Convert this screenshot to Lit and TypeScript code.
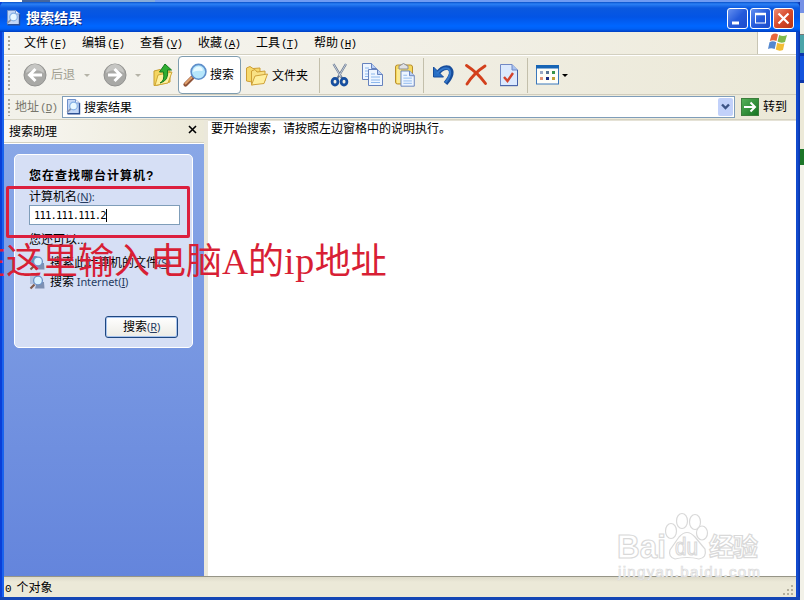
import { LitElement, html, svg, css } from "lit";
import { customElement } from "lit/decorators.js";

const icon = (w: number, h: number, body: unknown, cls = "") =>
  html`<svg class="ic ${cls}" width=${w} height=${h} viewBox="0 0 ${w} ${h}">${body}</svg>`;

const pageIcon = () => icon(16, 16, svg`
  <path d="M2.5 .5H10.5L14.5 4V14.5H2.5Z" fill="#c3d7f6" stroke="#6f90ca"/>
  <path d="M14.5 4V14.8H2.5" fill="none" stroke="#2c4f93" stroke-width="1.4"/>
  <path d="M10.5 .5V4H14.5" fill="#eef5ff" stroke="#7898cf"/>
  <circle cx="8.5" cy="7" r="3.8" fill="#e8f8ff" stroke="#86b2e6" stroke-width="1.2"/>
  <path d="M5.8 9.8L2.2 13.2" stroke="#8c94ab" stroke-width="1.8"/>`);

const circleArrow = (flip: boolean) => icon(24, 24, svg`
  <circle cx="12" cy="12" r="11" fill="#a9a9a6" stroke="#929290"/>
  <path d="M3 10a9 9 0 0 1 18 0Q12 4 3 10" fill="#c6c6c3"/>
  <g transform=${flip ? "translate(24 0) scale(-1 1)" : ""}>
    <path d="M19 12H7M12.5 6L6.5 12L12.5 18" fill="none" stroke="#fff" stroke-width="3"/></g>`);

const upIcon = () => icon(20, 24, svg`
  <path d="M1 8L7 6.5L9 8L17 8V19L3 22.5H1Z" fill="#f4d560" stroke="#c99f2c"/>
  <path d="M5 12L19 9L15 20L2 22.5Z" fill="#fff0a0" stroke="#cfa735"/>
  <path d="M7 20Q12 18 10.5 9H6.5L12 1L18.5 7H14.5Q16 18 7 20Z" fill="#2fae31" stroke="#167a1c"/>`);

const lens = () => icon(24, 24, svg`
  <path d="M9.5 14.5L2.5 21.5" stroke="#8d5136" stroke-width="4.2" stroke-linecap="round"/>
  <path d="M8.5 14.5L2.5 20.5" stroke="#dfa06c" stroke-width="2" stroke-linecap="round"/>
  <circle cx="15.5" cy="8.8" r="7.4" fill="#b5e6fb" stroke="#5e8fcb" stroke-width="1.6"/>
  <path d="M10 9Q10.5 3.5 16.5 3.5Q20.5 5 19.5 8Q14.5 7 10 9Z" fill="#e8faff"/>`);

const folders = () => icon(24, 22, svg`
  <path d="M1.5 16V3L5 1.5L8 3.5L15 3V8L7 17Z" fill="#f6d96c" stroke="#ce9f35"/>
  <path d="M6.5 20V6L10 4.5L12 7L20 6V16Z" fill="#f9e184" stroke="#ce9f35"/>
  <path d="M6.5 20L10 11L22.5 9L19 18.5Z" fill="#ffef9e" stroke="#d0a33a"/>`);

const cut = () => icon(20, 24, svg`
  <path d="M3.5 1L12.5 16M16 1L7 16" stroke="#65758e" stroke-width="2.2"/>
  <path d="M3.5 1L11 14M16 1L9 13" stroke="#dce3ec" stroke-width=".8"/>
  <ellipse cx="5" cy="18.7" rx="2.9" ry="3.3" fill="none" stroke="#174f9f" stroke-width="2.8"/>
  <ellipse cx="14" cy="18.7" rx="2.9" ry="3.3" fill="none" stroke="#174f9f" stroke-width="2.8"/>`);

const sheet = (x: number, y: number) => svg`<g transform="translate(${x} ${y})">
  <path d="M.5.5H9.5L14.5 5.5V16.5H.5Z" fill="#edf5ff" stroke="#6682bd"/>
  <path d="M9.5.5V5.5H14.5" fill="#b9cff5" stroke="#6682bd"/>
  <path d="M3 5H7M3 8H12M3 11H12M3 13.5H12" stroke="#8db8ed"/></g>`;

const copy = () => icon(22, 24, svg`${sheet(0, 0)}${sheet(6, 6)}`);
const paste = () => icon(22, 24, svg`
  <rect x="1.5" y="2" width="17" height="19" rx="2" fill="#f5d95f" stroke="#b98e2c"/>
  <rect x="3" y="6" width="4" height="14" fill="#fbea95"/>
  <path d="M5 6V3L7 2Q9.5-1 12 2L14 3V6Z" fill="#e0e1e4" stroke="#8d8d91"/>
  <g transform="translate(6.5 7.5) scale(.95)">${sheet(0, 0)}</g>`);
const undo = () => icon(24, 22, svg`
  <path d="M5 10Q11 2 17 4Q23 8.5 13.5 19.5" fill="none" stroke="#174d9b" stroke-width="4.6"/>
  <path d="M1.5 3V13H11.5L8 9.5L5 6.5Z" fill="#276fc5" stroke="#174d9b"/>
  <path d="M5 9.5Q11 2.5 16.5 4.7Q21 9 13.5 18.5" fill="none" stroke="#3478cc" stroke-width="2"/>`);
const del = () => icon(22, 22, svg`
  <path d="M1.5 1.5Q13 9 20.5 19.5M20 2Q9 9 2 20" fill="none" stroke="#d3401c" stroke-width="2.9" stroke-linecap="round"/>`);
const props = () => icon(18, 24, svg`
  <path d="M.5 1.5H12L17.5 7V22.5H.5Z" fill="#dce9fd" stroke="#7188c4"/>
  <path d="M12 1.5V7H17.5" fill="#a9c3f1" stroke="#7188c4"/>
  <path d="M17.5 7V22.7H0" fill="none" stroke="#445fa7"/>
  <path d="M4 14L7.5 18L13 10" fill="none" stroke="#d4432d" stroke-width="2.4"/>`);
const views = () => icon(23, 20, svg`
  <rect x=".5" y=".5" width="22" height="18.5" fill="#fffef8" stroke="#3b78bc"/>
  <rect x="0" y="0" width="23" height="3.5" fill="#1765b5"/>
  <path d="M4 6h3v3h-3z" fill="#9ba9c6"/><path d="M10 6h3v3h-3z" fill="#5c7696"/><path d="M16 6h3v3h-3z" fill="#369348"/>
  <path d="M4 12h3v3h-3z" fill="#e39378"/><path d="M10 12h3v3h-3z" fill="#192c83"/><path d="M16 12h3v3h-3z" fill="#c1a135"/>`);
const flag = () => icon(20, 19, svg`
  <path d="M3.5 2Q7-.5 10 1.5L8.5 8Q5 6.5 1.8 8Z" fill="#e7673c"/>
  <path d="M11.2 2Q15 4 19 2L17 9Q13 10.5 9.5 8.5Z" fill="#80b94c"/>
  <path d="M1.5 9.2Q5 7.5 8.2 9.3L6.7 16Q3 14.5 0 16Z" fill="#5588cf"/>
  <path d="M9.2 9.8Q12.5 11.5 16.5 10.2L15 17Q11 18.5 7.8 16.5Z" fill="#f2bd36"/>`);
const searchSmall = (globe: boolean) => icon(16, 16, svg`
  ${globe ? svg`<circle cx="6" cy="6" r="5" fill="#4d9db5"/>` : svg`<path d="M1 1h9v9h-9z" fill="#b4c3df"/>`}
  <path d="M8 8h7l.5 6.500H6z" fill="#7e90b2"/>
  <circle cx="9" cy="6.500" r="4.400" fill="#d8f1ff" stroke="#6b92c6" stroke-width="1.300"/>
  <path d="M5.500 10.500L1.500 14.500" stroke="#805c4c" stroke-width="2.200"/>`);

const MENUS: [string, string][] = [["文件", "F"], ["编辑", "E"], ["查看", "V"], ["收藏", "A"], ["工具", "T"], ["帮助", "H"]];

@customElement("app-root")
export class AppRoot extends LitElement {
  static styles = css`
    :host { display: block; width: 804px; height: 600px; overflow: hidden; position: relative;
      font: 12px/16px "Liberation Sans", "Noto Sans CJK SC", sans-serif; color: #000; background: #ece9d8; }
    * { box-sizing: border-box; }
    .ic { display: block; flex: none; overflow: visible; }
    .screen { display: flex; height: 600px; }
    .window { width: 800px; height: 600px; display: flex; flex-direction: column; background: linear-gradient(90deg, #0a3fd8 0 2px, #1a63ee 2px 4px, #0a44c4 5px 796px, #1650d6 797px, #0632a8 800px); }
    .behind { width: 4px; display: flex; flex-direction: column; background: #ece9d8; }
    .b1 { height: 13px; background: #7591e6; } .b2 { height: 21px; background: #f1efe4; }
    .b3 { height: 19px; background: #4ba4a9; border-top: 1px solid #777; } .b4 { height: 30px; background: #1454dd; border-block: 3px solid #0a35ab; }
    .b5 { height: 66px; } .b6 { height: 16px; background: #1c7628; } .b7 { flex: 1; background: #f2f1e8; }
    .top { height: 2px; background: linear-gradient(90deg, #fff 0 22px, #45659c 22px 50px, #88acd8 50px 155px, #6f9bf3 155px); }
    .title { height: 30px; padding: 0 6px 0 5px; display: flex; align-items: center; gap: 5px; border-radius: 5px 6px 0 0;
      background: linear-gradient(#0850c8 0, #2b80f5 2px, #0b59df 6px, #0354e5 15px, #0066ff 24px, #0060f5 27px, #003dc0 30px); color: #fff; font-weight: 700; font-size: 14px; text-shadow: 1px 1px #0a2b80; }
    .title .name { flex: 1; padding-top: 2px; }
    .title .ic { margin-top: 1px; }
    .caption { display: flex; gap: 2px; margin-top: 3px; }
    .cb { width: 21px; height: 21px; border: 1px solid #fff; border-radius: 3px; background: linear-gradient(135deg, #6590f0, #255bdb 50%, #1c4ccc); }
    .cb.close { background: linear-gradient(135deg, #ed8d75, #d7492a 50%, #b73517); }
    .title .cb .ic { margin: 0; }
    .client { flex: 1; min-height: 0; margin: 0 4px; display: flex; flex-direction: column; background: #ece9d8; }
    .bottom { height: 3px; background: #1446b5; }
    .menu { height: 23px; display: flex; align-items: stretch; border-bottom: 1px solid #d3d0c0; background: linear-gradient(90deg, #f6f5f1, #eeebdc); }
    .grip { width: 3px; margin: 4px 0 3px 4px; background: radial-gradient(circle at 1px 1px, #aaa797 1px, transparent 1.3px) 0 0 / 3px 4px; }
    .items { flex: 1; display: flex; gap: 16px; padding: 3px 0 0 13px; }
    .mi { width: 42px; white-space: nowrap; }
    .mono { font: 11px/14px "Liberation Mono", monospace; letter-spacing: -.9px; padding-left: 1px; }
    .brand { width: 39px; background: #fff; border-left: 1px solid #c8c5b4; padding: 1px 0 0 10px; }
    .tools { height: 40px; display: flex; align-items: center; border-top: 1px solid #fff; border-bottom: 1px solid #d1cdbd; background: linear-gradient(90deg, #f4f3ee, #ece9d8); }
    .tools .grip, .addr .grip { align-self: stretch; }
    .back { margin-left: 12px; display: flex; align-items: center; color: #a19f92; gap: 4px; }
    .caret { width: 0; height: 0; border: 3px solid transparent; border-top-color: #b5b3a7; border-bottom: 0; }
    .caret.dark { border-top-color: #000; margin-left: 3px; }
    .m9 { margin-left: 9px; } .m10 { margin-left: 10px; } .m11 { margin-left: 11px; } .m12 { margin-left: 12px; } .m13 { margin-left: 13px; } .m8 { margin-left: 8px; } .m7 { margin-left: 7px; }
    .search { margin-left: 5px; width: 63px; height: 38px; padding-left: 4px; display: flex; align-items: center; gap: 3px; background: #fff; border: 1px solid #7f9db0; border-radius: 4px; }
    .fold { margin-left: 4px; display: flex; align-items: center; gap: 3px; width: 63px; white-space: nowrap; padding-top: 1px; }
    .sep { width: 1px; height: 35px; background: #c3bfab; }
    .addr { height: 25px; display: flex; align-items: center; border-bottom: 1px solid #d5d2c2; background: linear-gradient(90deg, #f2f1ea, #ece9d8); }
    .lab { margin-left: 4px; width: 47px; color: #77756b; white-space: nowrap; }
    .combo { width: 673px; height: 22px; background: #fff; border: 1px solid #7f9db9; display: flex; align-items: center; padding: 0 1px 0 2px; }
    .combo span { flex: 1; padding-left: 3px; padding-top: 2px; }
    .drop { width: 15px; height: 18px; background: #c2d1fa; border-radius: 2px; padding: 5px 3px; }
    .go { width: 18px; height: 18px; margin: 0 4px 0 6px; background: linear-gradient(135deg, #55b058, #177423); border: 1px solid #3c7e3c; }
    .body { flex: 1; display: flex; min-height: 0; }
    .side { width: 200px; display: flex; flex-direction: column; background: linear-gradient(#8ba9e7, #6485dc); }
    .shead { height: 24px; padding: 4px 5px 0 5px; display: flex; justify-content: space-between; background: linear-gradient(90deg, #f8f7f3, #ece9d8); border-bottom: 1px solid #fff; box-shadow: inset 0 -1px #d4d1c2; }
    .x { margin: 1px 2px 0 0; }
    .card { margin: 10px 11px 0 10px; height: 194px; border: 1px solid #fff; border-radius: 5px; background: #d6dff5; padding: 13px 14px 0 14px; display: flex; flex-direction: column; }
    .q { font-weight: 700; letter-spacing: 1px; white-space: nowrap; height: 21px; }
    .latin { font: 11px/14px "Noto Sans", sans-serif; color: #263c62; letter-spacing: -.1px; }
    .name2 { height: 16px; }
    .input { width: 151px; height: 20px; border: 1px solid #7f9db9; background: #fff; padding: 1px 4px; display: flex; align-items: center; font: 10.5px/16px "DejaVu Sans Mono", monospace; letter-spacing: -.8px; }
    .cur { width: 1px; height: 13px; background: #000; }
    .also { margin-top: 8px; height: 20px; line-height: 15px; }
    .link { display: flex; gap: 5px; height: 19px; align-items: center; white-space: nowrap; }
    .btn { align-self: flex-end; width: 73px; height: 22px; margin-top: 25px; border: 1px solid #1e4780; border-radius: 3px; background: linear-gradient(#fff, #ecebe5); box-shadow: inset 0 0 0 1px #a9c4ee; text-align: center; padding-top: 2px; }
    .split { width: 4px; background: #ebe8db; }
    .main { flex: 1; background: #fff; padding: 0 0 0 3px; border-top: 1px solid #e5e2d6; }
    .status { height: 21px; border-top: 1px solid #969587; background: linear-gradient(#dddac9, #ece9d8 5px); display: flex; justify-content: space-between; align-items: flex-start; padding: 2px 2px 0 0; }
    .status .st { line-height: 18px; white-space: pre; }
    .status .ic { margin-top: 5px; }
    .frame { position: absolute; left: 6px; top: 186px; width: 184px; height: 52px; border: 3px solid #dc1f3e; border-radius: 2px; }
    .note { position: absolute; left: -30px; top: 237px; font: 36px/50px "Liberation Serif", "Noto Sans CJK SC", serif; color: #d81f35; white-space: nowrap; }
    .ip { font-size: 38px; line-height: 40px; letter-spacing: .6px; }
    .mark { position: absolute; left: 610px; top: 508px; }
    .big { font: 700 34px "Liberation Sans", sans-serif; } .mid { font: 700 25px "Noto Sans CJK SC", sans-serif; }
    .dom { font: 15px "Liberation Sans", sans-serif; } .du { font: 400 23px "Liberation Sans", sans-serif; }
  `;

  render() {
    return html`
      <div class="screen">
        <div class="window">
          <div class="top"></div>
          <div class="title">
            ${pageIcon()}<span class="name">搜索结果</span>
            <div class="caption">
              <div class="cb">${icon(19, 19, svg`<path d="M4 14H11" stroke="#fff" stroke-width="3"/>`)}</div>
              <div class="cb">${icon(19, 19, svg`<rect x="4.5" y="5" width="10" height="9" fill="none" stroke="#fff"/><path d="M4 5H15" stroke="#fff" stroke-width="2.5"/>`)}</div>
              <div class="cb close">${icon(19, 19, svg`<path d="M4.5 4.5L14.5 14.5M14.5 4.5L4.5 14.5" stroke="#fff" stroke-width="2.2"/>`)}</div>
            </div>
          </div>
          <div class="client">
            <div class="menu">
              <div class="grip"></div>
              <div class="items">${MENUS.map(([t, k]) => html`<div class="mi">${t}<span class="mono">(<u>${k}</u>)</span></div>`)}</div>
              <div class="brand">${flag()}</div>
            </div>
            <div class="tools">
              <div class="grip"></div>
              <div class="back">${circleArrow(false)}<span>后退</span></div>
              <div class="caret m9"></div>
              <div class="m13">${circleArrow(true)}</div>
              <div class="caret m8"></div>
              <div class="m12">${upIcon()}</div>
              <div class="search">${lens()}<span>搜索</span></div>
              <div class="fold">${folders()}<span>文件夹</span></div>
              <div class="sep m11"></div>
              <div class="m10">${cut()}</div>
              <div class="m12">${copy()}</div>
              <div class="m10">${paste()}</div>
              <div class="sep m7"></div>
              <div class="m8">${undo()}</div>
              <div class="m9">${del()}</div>
              <div class="m13">${props()}</div>
              <div class="sep m9"></div>
              <div class="m8">${views()}</div>
              <div class="caret dark"></div>
            </div>
            <div class="addr">
              <div class="grip"></div>
              <div class="lab">地址<span class="mono">(<u>D</u>)</span></div>
              <div class="combo">${pageIcon()}<span>搜索结果</span>
                <div class="drop">${icon(9, 8, svg`<path d="M1 1.5L4.5 5L8 1.5" fill="none" stroke="#3d5486" stroke-width="2.4"/>`)}</div>
              </div>
              <div class="go">${icon(16, 16, svg`<path d="M2 8H13M8.5 3.5L13 8L8.5 12.5" fill="none" stroke="#fff" stroke-width="2"/>`)}</div>
              <span>转到</span>
            </div>
            <div class="body">
              <div class="side">
                <div class="shead"><span>搜索助理</span><div class="x">${icon(9, 9, svg`<path d="M1 1L8 8M8 1L1 8" stroke="#000" stroke-width="1.6"/>`)}</div></div>
                <div class="card">
                  <div class="q">您在查找哪台计算机?</div>
                  <div class="name2">计算机名<span class="latin">(<u>N</u>):</span></div>
                  <div class="input">111.111.111.2<div class="cur"></div></div>
                  <div class="also">您还可以...</div>
                  <div class="link">${searchSmall(true)}<span>搜索此计算机的文件<span class="latin">(<u>S</u>)</span></span></div>
                  <div class="link">${searchSmall(false)}<span>搜索<span class="latin"> Internet(<u>I</u>)</span></span></div>
                  <div class="btn">搜索<span class="latin">(<u>R</u>)</span></div>
                </div>
              </div>
              <div class="split"></div>
              <div class="main">要开始搜索，请按照左边窗格中的说明执行。</div>
            </div>
            <div class="status"><span class="st"><span class="mono">0 </span>个对象</span>
              ${icon(12, 12, svg`<path d="M9 1h2v2h-2zM5 5h2v2h-2zM9 5h2v2h-2zM1 9h2v2h-2zM5 9h2v2h-2zM9 9h2v2h-2z" fill="#b3af9d"/>`)}</div>
          </div>
          <div class="bottom"></div>
        </div>
        <div class="behind"><i class="b1"></i><i class="b2"></i><i class="b3"></i><i class="b4"></i><i class="b5"></i><i class="b6"></i><i class="b7"></i></div>
      </div>
      <div class="frame"></div>
      <div class="note">在这里输入电脑A的<span class="ip">ip</span>地址</div>
      <svg class="mark" width="160" height="78" viewBox="0 0 160 78" fill="#fff" stroke="#d9d9d9" stroke-width="1.2">
        <text class="big" x="7" y="50" textLength="49" lengthAdjust="spacingAndGlyphs">Bai</text>
        <path d="M60 42Q58 49 65 51Q77 48 89 51Q97 50 95 41L85 29Q77 20 69 29Z"/>
        <ellipse cx="61" cy="23" rx="5.5" ry="7.5"/><ellipse cx="72" cy="13" rx="5.5" ry="7.5"/>
        <ellipse cx="85" cy="14" rx="5.5" ry="7.5"/><ellipse cx="92" cy="25" rx="5.5" ry="7"/>
        <text class="du" x="65" y="47" textLength="23" lengthAdjust="spacingAndGlyphs">du</text>
        <text class="mid" x="99" y="48" textLength="49">经验</text>
        <text class="dom" x="8" y="69" stroke-width=".7" textLength="142">jingyan.baidu.com</text>
      </svg>
    `;
  }
}
